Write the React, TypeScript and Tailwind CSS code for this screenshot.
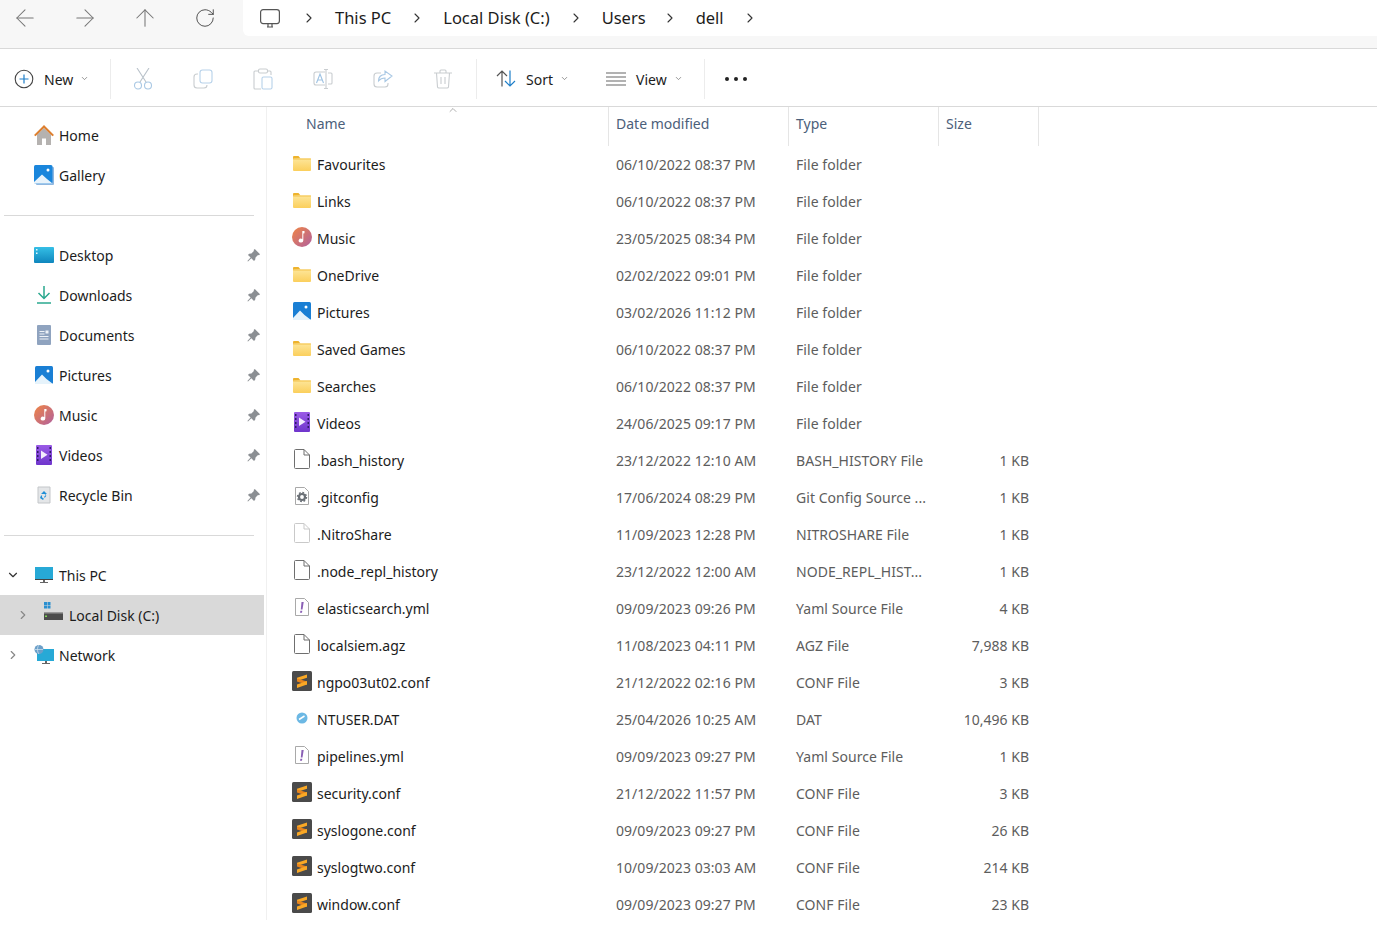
import { ArrowLeft, ArrowRight, ArrowUp, RotateCw, ChevronRight, ChevronDown, ChevronUp } from "lucide-react";
import type { ReactNode } from "react";

const FONT = "font-['Noto_Sans','Open_Sans',sans-serif]";

function FolderIcon() {
  return (
    <svg width="18" height="15" viewBox="0 0 18 15">
      <defs>
        <linearGradient id="folderFill" x1="0" y1="0" x2="0" y2="1">
          <stop offset="0" stopColor="#fde69a" />
          <stop offset="1" stopColor="#fbcf5c" />
        </linearGradient>
      </defs>
      <path d="M0 3V1.200C0 .6.5 0 1.200 0h4.300l2 2.500z" fill="#eeb32d" />
      <rect y="2.500" width="18" height="12.500" rx="1" fill="url(#folderFill)" />
      <rect y="2.500" width="18" height="1" fill="#f4c24a" />
    </svg>
  );
}

function PicturesIcon({ size = 18 }: { size?: number }) {
  return (
    <svg width={size} height={size} viewBox="0 0 18 18">
      <rect width="18" height="18" rx="1.500" fill="#1a7fd4" />
      <circle cx="13" cy="5" r="1.500" fill="#fff" />
      <path d="M0 16 7 8.500l4.500 4.500L18 18H0z" fill="#e6f3fb" />
    </svg>
  );
}

function GalleryIcon() {
  return (
    <svg width="20" height="20" viewBox="0 0 20 20">
      <rect x="2" y="2" width="18" height="18" rx="1" fill="#8fb7e0" />
      <rect width="18.500" height="18.500" rx="1.500" fill="#1a86dc" />
      <circle cx="14" cy="5" r="1.500" fill="#fff" />
      <path d="M0 17 8 9.500l5 4.500 5.500 4.500H0z" fill="#e8f3fb" />
    </svg>
  );
}

function MusicIcon() {
  return (
    <svg width="20" height="20" viewBox="0 0 20 20">
      <defs>
        <linearGradient id="musicFill" x1="0" y1="0" x2="1" y2="1">
          <stop offset="0" stopColor="#f08544" />
          <stop offset="1" stopColor="#b0609f" />
        </linearGradient>
      </defs>
      <circle cx="10" cy="10" r="10" fill="url(#musicFill)" />
      <path d="M10.300 4h2.200v2.300l-1.200.3v7a2.300 2 0 1 1-1-1.700z" fill="#fff" />
    </svg>
  );
}

function VideosIcon() {
  return (
    <svg width="16" height="20" viewBox="0 0 16 20">
      <defs>
        <linearGradient id="videoFill" x1="0" y1="0" x2="0" y2="1">
          <stop offset="0" stopColor="#9a5be6" />
          <stop offset="1" stopColor="#6f35cc" />
        </linearGradient>
      </defs>
      <rect width="16" height="20" rx="1" fill="url(#videoFill)" />
      <path d="M5 5.500v8.500l6.500-4.200z" fill="#f3ecfd" />
      <path d="M1 2h1.500v2H1zM1 6h1.500v2H1zM1 10h1.500v2H1zM1 14h1.500v2H1zM13.500 2H15v2h-1.500zM13.500 6H15v2h-1.500zM13.500 10H15v2h-1.500zM13.500 14H15v2h-1.500z" fill="#2f1a66" />
    </svg>
  );
}

function HomeIcon() {
  return (
    <svg width="20" height="20" viewBox="0 0 20 20">
      <path d="M3 9.500 10 3l7 6.500V20h-5v-6.500H8V20H3z" fill="#b5b2b0" />
      <path d="M0 10 10 0l10 10-1.500 1.200L10 3 1.500 11.200z" fill="#de7f2e" />
    </svg>
  );
}

function DesktopIcon() {
  return (
    <svg width="20" height="16" viewBox="0 0 20 16">
      <defs>
        <linearGradient id="desktopFill" x1="0" y1="0" x2="0" y2="1">
          <stop offset="0" stopColor="#35bfe6" />
          <stop offset="1" stopColor="#0f86bd" />
        </linearGradient>
      </defs>
      <rect width="20" height="16" rx="1" fill="url(#desktopFill)" />
      <path d="M2 2h1.500v1.500H2zM2 5.500h1.500V7H2z" fill="#e6f8fd" />
    </svg>
  );
}

function DownloadsIcon() {
  return (
    <svg width="16" height="18" viewBox="0 0 16 18" fill="none" stroke="#2aa88f" strokeWidth="1.500">
      <path d="M8 0v12M2.500 7 8 12.500 13.500 7" />
      <path d="M1 17h14" />
    </svg>
  );
}

function DocumentsIcon() {
  return (
    <svg width="14" height="20" viewBox="0 0 14 20">
      <rect width="14" height="20" rx="1" fill="#8fa3bf" />
      <path d="M2.500 6h5v1h-5zM2.500 8.500h5v1h-5zM2.500 11h9v1h-9zM2.500 13.500h9v1h-9z" fill="#eef2f7" />
      <rect x="8.500" y="5.500" width="3" height="3" fill="#eef2f7" />
    </svg>
  );
}

function RecycleIcon() {
  return (
    <svg width="14" height="18" viewBox="0 0 14 18">
      <path d="M1 1h12v16H1z" fill="#e4e6e8" stroke="#c3c6c9" />
      <path d="M7 5 10 8H8.500a2 2 0 0 1-1.500 3.500v-1a1 1 0 0 0 .5-2.500H4z" fill="#1f8fd6" />
      <path d="M4 9.500h1.200A2 2 0 0 0 7 12.500L6 14l-3-2z" fill="#1f8fd6" />
    </svg>
  );
}

function ThisPcIcon() {
  return (
    <svg width="18" height="16" viewBox="0 0 18 16">
      <rect width="18" height="12" fill="#27a9d6" />
      <rect y="12" width="18" height="1" fill="#444" />
      <path d="M8 13h2v2h3v1H5v-1h3z" fill="#666" />
    </svg>
  );
}

function LocalDiskIcon() {
  return (
    <svg width="20" height="18" viewBox="0 0 20 18">
      <path d="M0 0h3v3H0zM3.500 0h3v3h-3zM0 3.500h3v3H0zM3.500 3.500h3v3h-3z" fill="#2a8fd0" />
      <rect y="11" width="19" height="7" fill="#4b4b4b" />
      <rect y="10" width="19" height="1.500" fill="#9a9a9a" />
      <rect x="1" y="13.500" width="2" height="1.500" fill="#7ed957" />
    </svg>
  );
}

function NetworkIcon() {
  return (
    <svg width="20" height="20" viewBox="0 0 20 20">
      <rect x="3" y="4" width="17" height="12" fill="#27a9d6" />
      <path d="M11 16h2v2h3v1H8v-1h3z" fill="#666" />
      <circle cx="5" cy="4.500" r="4.500" fill="#6b9fc9" />
      <path d="M1 4.500h8M5 0c-2 2-2 7 0 9" stroke="#d6e6f2" strokeWidth=".7" fill="none" />
    </svg>
  );
}

function PinIcon() {
  return (
    <svg width="13" height="13" viewBox="0 0 13 13">
      <path d="M7.800 0 13 5.200l-1 1-1-.3-2.500 2.500-.3 2.300L7 11.900 4.300 9.200 1 12.500l-.6-.6 3.200-3.300L1 6l1.100-1.200 2.300-.3L6.900 2 6.700 1z" fill="#8b8f93" />
    </svg>
  );
}

function BlankFileIcon({ pale = false }: { pale?: boolean }) {
  return (
    <svg width="16" height="20" viewBox="0 0 16 20" fill="#fff" stroke={pale ? "#c9c9c9" : "#6f6f6f"}>
      <path d="M.5 1.500a1 1 0 0 1 1-1h8.500l5.500 5.500v12.500a1 1 0 0 1-1 1h-13a1 1 0 0 1-1-1z" />
      <path d="M10 .5V6h5.500" fill="none" />
    </svg>
  );
}

function ConfigFileIcon() {
  return (
    <svg width="14" height="18" viewBox="0 0 14 18" fill="#fff">
      <path d="M.5.500h9l4 4v13H.5z" stroke="#a9a9a9" />
      <circle cx="7" cy="10" r="3" fill="none" stroke="#6b7076" strokeWidth="2.200" />
      <circle cx="7" cy="10" r="4.500" fill="none" stroke="#6b7076" strokeWidth="1.400" strokeDasharray="1.800 1.700" />
    </svg>
  );
}

function YamlFileIcon() {
  return (
    <svg width="14" height="18" viewBox="0 0 14 18" fill="#fff">
      <path d="M.5.500h9l4 4v13H.5z" stroke="#a9a9a9" />
      <path d="M6.500 4h2.200L7.500 11.500H5.800zM5.400 12.800h1.900l-.3 2H5z" fill="#8a5fb5" />
    </svg>
  );
}

function SublimeIcon() {
  return (
    <svg width="20" height="20" viewBox="0 0 20 20">
      <rect width="20" height="20" rx="1.500" fill="#4a4a4a" />
      <path d="M15 3.500v3.200L5 10V6.800z" fill="#f9a825" />
      <path d="M5 7.500 15 10.500v3.200L5 10.500z" fill="#e8851d" />
      <path d="M15 10v3.500L5 17v-3.500z" fill="#f9a825" />
    </svg>
  );
}

function DatIcon() {
  return (
    <svg width="12" height="12" viewBox="0 0 12 12">
      <circle cx="6" cy="6" r="5.500" fill="#6cb8e4" />
      <path d="M3 7.500 8.500 4" stroke="#fff" strokeWidth="1.500" />
    </svg>
  );
}

const quickAccess = [
  { label: "Desktop", icon: <DesktopIcon /> },
  { label: "Downloads", icon: <DownloadsIcon /> },
  { label: "Documents", icon: <DocumentsIcon /> },
  { label: "Pictures", icon: <PicturesIcon /> },
  { label: "Music", icon: <MusicIcon /> },
  { label: "Videos", icon: <VideosIcon /> },
  { label: "Recycle Bin", icon: <RecycleIcon /> },
];

const folder = <FolderIcon />;
const blank = <BlankFileIcon />;
const yaml = <YamlFileIcon />;
const sublime = <SublimeIcon />;

const files: { name: string; date: string; type: string; size?: string; icon: ReactNode }[] = [
  { name: "Favourites", date: "06/10/2022 08:37 PM", type: "File folder", icon: folder },
  { name: "Links", date: "06/10/2022 08:37 PM", type: "File folder", icon: folder },
  { name: "Music", date: "23/05/2025 08:34 PM", type: "File folder", icon: <MusicIcon /> },
  { name: "OneDrive", date: "02/02/2022 09:01 PM", type: "File folder", icon: folder },
  { name: "Pictures", date: "03/02/2026 11:12 PM", type: "File folder", icon: <PicturesIcon /> },
  { name: "Saved Games", date: "06/10/2022 08:37 PM", type: "File folder", icon: folder },
  { name: "Searches", date: "06/10/2022 08:37 PM", type: "File folder", icon: folder },
  { name: "Videos", date: "24/06/2025 09:17 PM", type: "File folder", icon: <VideosIcon /> },
  { name: ".bash_history", date: "23/12/2022 12:10 AM", type: "BASH_HISTORY File", size: "1 KB", icon: blank },
  { name: ".gitconfig", date: "17/06/2024 08:29 PM", type: "Git Config Source ...", size: "1 KB", icon: <ConfigFileIcon /> },
  { name: ".NitroShare", date: "11/09/2023 12:28 PM", type: "NITROSHARE File", size: "1 KB", icon: <BlankFileIcon pale /> },
  { name: ".node_repl_history", date: "23/12/2022 12:00 AM", type: "NODE_REPL_HIST...", size: "1 KB", icon: blank },
  { name: "elasticsearch.yml", date: "09/09/2023 09:26 PM", type: "Yaml Source File", size: "4 KB", icon: yaml },
  { name: "localsiem.agz", date: "11/08/2023 04:11 PM", type: "AGZ File", size: "7,988 KB", icon: blank },
  { name: "ngpo03ut02.conf", date: "21/12/2022 02:16 PM", type: "CONF File", size: "3 KB", icon: sublime },
  { name: "NTUSER.DAT", date: "25/04/2026 10:25 AM", type: "DAT", size: "10,496 KB", icon: <DatIcon /> },
  { name: "pipelines.yml", date: "09/09/2023 09:27 PM", type: "Yaml Source File", size: "1 KB", icon: yaml },
  { name: "security.conf", date: "21/12/2022 11:57 PM", type: "CONF File", size: "3 KB", icon: sublime },
  { name: "syslogone.conf", date: "09/09/2023 09:27 PM", type: "CONF File", size: "26 KB", icon: sublime },
  { name: "syslogtwo.conf", date: "10/09/2023 03:03 AM", type: "CONF File", size: "214 KB", icon: sublime },
  { name: "window.conf", date: "09/09/2023 09:27 PM", type: "CONF File", size: "23 KB", icon: sublime },
];

function Crumb({ label, width = "" }: { label: string; width?: string }) {
  return (
    <>
      <span className={`text-[16.5px] leading-none whitespace-nowrap text-[#1c1c1c] ${width}`}>{label}</span>
      <ChevronRight size={16} strokeWidth={1.6} className="text-[#333]" />
    </>
  );
}

function Toolbar() {
  return (
    <div className="flex h-[58px] items-center border-b border-[#d9d9d9] bg-white pt-[2px] text-[14px] text-[#1c1c1c]">
      {/* New */}
      <div className="flex w-[110px] items-center pl-[14px]">
        <svg width="20" height="20" viewBox="0 0 20 20" fill="none">
          <circle cx="10" cy="10" r="8.800" stroke="#444" strokeWidth="1.100" />
          <path d="M10 5.500v9M5.500 10h9" stroke="#1f7fc9" strokeWidth="1.200" />
        </svg>
        <span className="mt-[2px] ml-[10px]">New</span>
        <ChevronDown size={9} className="ml-[7px] text-[#777]" />
      </div>
      <div className="h-10 w-px bg-[#ececec]" />

      {/* disabled actions */}
      <div className="flex w-[365px] items-center">
        <div className="flex w-[60px] justify-center pl-[3px]">
          <svg width="20" height="22" viewBox="0 0 20 22" fill="none" stroke="#b9c2ca" strokeWidth="1.100">
            <path d="M4 0 13 14M16 0 7 14" />
            <circle cx="5" cy="17.500" r="3.500" stroke="#a9c8e4" />
            <circle cx="15" cy="17.500" r="3.500" stroke="#a9c8e4" />
          </svg>
        </div>
        <div className="flex w-[60px] justify-center pl-[3px]">
          <svg width="20" height="20" viewBox="0 0 20 20" fill="none" strokeWidth="1.100">
            <rect x="7" y="1" width="12" height="13" rx="2.500" stroke="#b7d2ea" />
            <path d="M5 5H4a3 3 0 0 0-3 3v8a3 3 0 0 0 3 3h7a3 3 0 0 0 3-3" stroke="#c9cdd0" />
          </svg>
        </div>
        <div className="flex w-[60px] justify-center pl-[3px]">
          <svg width="20" height="22" viewBox="0 0 20 22" fill="none" strokeWidth="1.100">
            <path d="M6 3H2a1 1 0 0 0-1 1v16a1 1 0 0 0 1 1h6M14 3h3a1 1 0 0 1 1 1v3" stroke="#c9cdd0" />
            <rect x="5.500" y="1" width="9" height="4" rx="1.500" stroke="#c9cdd0" />
            <rect x="9" y="9" width="10" height="12" rx="1.500" stroke="#b7d2ea" />
          </svg>
        </div>
        <div className="flex w-[60px] justify-center pl-[3px]">
          <svg width="20" height="20" viewBox="0 0 20 20" fill="none" strokeWidth="1.100">
            <path d="M12 3H3a2 2 0 0 0-2 2v9a2 2 0 0 0 2 2h9" stroke="#c9cdd0" />
            <path d="M3.500 14 7 5l3.500 9M4.800 11h4.400" stroke="#9fc3e3" />
            <path d="M13 1v18M11 .5h4M11 19.500h4M15 4h3a1 1 0 0 1 1 1v9a1 1 0 0 1-1 1h-3" stroke="#c9cdd0" />
          </svg>
        </div>
        <div className="flex w-[60px] justify-center pl-[3px]">
          <svg width="20" height="20" viewBox="0 0 20 20" fill="none" strokeWidth="1.100">
            <path d="M8 4H4a3 3 0 0 0-3 3v8a3 3 0 0 0 3 3h8a3 3 0 0 0 3-3v-1" stroke="#c9cdd0" />
            <path d="M12 2v3.500C8 5.500 5.500 8 5.500 12c2-2.500 4-3 6.500-3v3.500L19 7z" stroke="#a9c8e4" />
          </svg>
        </div>
        <div className="flex w-[60px] justify-center pl-[3px]">
          <svg width="18" height="20" viewBox="0 0 18 20" fill="none" stroke="#c9cdd0" strokeWidth="1.100">
            <path d="M0 4h18M6 4V2a1 1 0 0 1 1-1h4a1 1 0 0 1 1 1v2M2.500 4l1 14a1.500 1.500 0 0 0 1.500 1h8a1.500 1.500 0 0 0 1.500-1l1-14M7 8v7M11 8v7" />
          </svg>
        </div>
      </div>
      <div className="h-10 w-px bg-[#ececec]" />

      {/* Sort */}
      <div className="ml-[19px] flex items-center">
        <svg width="20" height="17" viewBox="0 0 20 17" fill="none" strokeWidth="1.200">
          <path d="M6 16.500V1M1 6l5-5 5 5" stroke="#555" />
          <path d="M14 .5V16M9 11l5 5 5-5" stroke="#1f7fc9" />
        </svg>
        <span className="mt-[2px] ml-[10px]">Sort</span>
        <ChevronDown size={9} className="ml-[7px] text-[#777]" />
      </div>

      {/* View */}
      <div className="ml-[37px] flex items-center">
        <svg width="20" height="14" viewBox="0 0 20 14" stroke="#666" strokeWidth="1.100">
          <path d="M0 1h20M0 5h20M0 9h20M0 13h20" />
        </svg>
        <span className="mt-[2px] ml-[10px]">View</span>
        <ChevronDown size={9} className="ml-[7px] text-[#777]" />
      </div>
      <div className="ml-[21px] h-10 w-px bg-[#ececec]" />

      {/* More */}
      <div className="ml-[20px] flex gap-[5px]">
        <div className="size-1 rounded-full bg-[#222]" />
        <div className="size-1 rounded-full bg-[#222]" />
        <div className="size-1 rounded-full bg-[#222]" />
      </div>
    </div>
  );
}

function NavRow({ icon, label, pinned = false }: { icon: ReactNode; label: string; pinned?: boolean }) {
  return (
    <div className="flex h-10 items-center">
      <div className="flex w-[59px] justify-center pl-[29px]">{icon}</div>
      <span className="flex-1">{label}</span>
      {pinned && (
        <div className="pr-[6px]">
          <PinIcon />
        </div>
      )}
    </div>
  );
}

function Sidebar() {
  return (
    <aside className="h-[813px] w-[267px] shrink-0 border-r border-[#f0f0f0] pt-2 text-[14px] text-[#1c1c1c]">
      <NavRow icon={<HomeIcon />} label="Home" />
      <NavRow icon={<GalleryIcon />} label="Gallery" />
      <div className="mx-1 mt-5 mb-[19px] h-px w-[250px] bg-[#d9d9d9]" />
      {quickAccess.map((item) => (
        <NavRow key={item.label} icon={item.icon} label={item.label} pinned />
      ))}
      <div className="mx-1 mt-5 mb-[19px] h-px w-[250px] bg-[#d9d9d9]" />
      <div className="flex h-10 items-center">
        <ChevronDown size={14} strokeWidth={2} className="ml-[6px] text-[#333]" />
        <div className="ml-[14px] flex w-[20px] justify-center"><ThisPcIcon /></div>
        <span className="ml-[5px]">This PC</span>
      </div>
      <div className="flex h-10 w-[264px] items-center bg-[#d9d9d9]">
        <ChevronRight size={14} className="ml-[16px] text-[#888]" />
        <div className="mb-2 ml-[14px]"><LocalDiskIcon /></div>
        <span className="ml-[5px]">Local Disk (C:)</span>
      </div>
      <div className="flex h-10 items-center">
        <ChevronRight size={14} className="ml-[6px] text-[#888]" />
        <div className="ml-[14px]"><NetworkIcon /></div>
        <span className="ml-[5px]">Network</span>
      </div>
    </aside>
  );
}

function FileList() {
  return (
    <div className="flex-1 text-[14px]">
      <div className="relative flex h-[38.5px] text-[#4c607a]">
        <ChevronUp size={12} strokeWidth={1.2} className="absolute top-[-3px] left-[180px] text-[#777]" />
        <div className="w-[341px] pt-[6px] pl-[39px]">Name</div>
        <div className="w-[180px] border-l border-[#e5e5e5] pt-[6px] pl-[7px]">Date modified</div>
        <div className="w-[150px] border-l border-[#e5e5e5] pt-[6px] pl-[7px]">Type</div>
        <div className="w-[101px] border-x border-[#e5e5e5] pt-[6px] pl-[7px]">Size</div>
      </div>
      {files.map((file) => (
        <div key={file.name} className="flex h-[37px] items-center">
          <div className="flex w-[341px] items-center">
            <div className="flex w-[50px] justify-center pb-[2px] pl-[20px]">{file.icon}</div>
            <span className="text-[#1c1c1c]">{file.name}</span>
          </div>
          <div className="w-[180px] pl-2 tracking-[0.05px] text-[#5d5d5d]">{file.date}</div>
          <div className="w-[150px] pl-2 tracking-[0.05px] text-[#5d5d5d]">{file.type}</div>
          <div className="w-[91px] text-right text-[#5d5d5d]">{file.size}</div>
        </div>
      ))}
    </div>
  );
}

export default function App() {
  return (
    <div className={`h-[925px] overflow-hidden bg-white ${FONT}`}>
      {/* address bar */}
      <div className="flex h-[49px] border-b border-[#d9d9d9] bg-[#f7f7f7]">
        <div className="flex w-[243px] items-center gap-8 pb-[12px] pl-[11px] text-[#777]">
          <ArrowLeft size={28} strokeWidth={0.9} />
          <ArrowRight size={28} strokeWidth={0.9} />
          <ArrowUp size={28} strokeWidth={0.9} />
          <div className="flex w-7 justify-center">
            <RotateCw size={22} strokeWidth={1} className="text-[#444]" />
          </div>
        </div>
        <div className="flex h-9 flex-1 items-center gap-[18px] rounded-bl-md bg-white pl-[17px]">
          <svg width="20" height="19" viewBox="0 0 20 19" fill="none" stroke="#555" strokeWidth="1.200">
            <rect x=".6" y=".6" width="18.800" height="14" rx="2.500" />
            <path d="M7 18h6M8 15v3M12 15v3" />
          </svg>
          <ChevronRight size={16} strokeWidth={1.6} className="ml-[3px] text-[#333]" />
          <Crumb label="This PC" />
          <Crumb label="Local Disk (C:)" />
          <Crumb label="Users" width="w-[42px]" />
          <Crumb label="dell" />
        </div>
      </div>

      <Toolbar />

      <div className="flex">
        <Sidebar />
        <FileList />
      </div>
    </div>
  );
}
